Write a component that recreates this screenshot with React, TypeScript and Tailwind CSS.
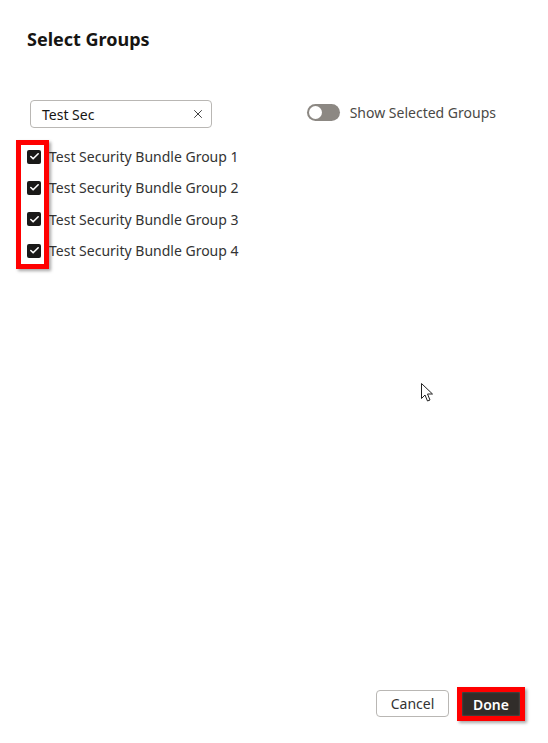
import { Check, X } from "lucide-react";

const groups = [
  "Test Security Bundle Group 1",
  "Test Security Bundle Group 2",
  "Test Security Bundle Group 3",
  "Test Security Bundle Group 4",
];

export default function App() {
  return (
    <div className="relative flex h-[743px] w-[548px] flex-col bg-white font-['Noto_Sans',sans-serif] text-[#333]">
      <h1 className="px-[27px] pt-[27px] text-[18px] font-bold leading-[24px] text-[#161513]">
        Select Groups
      </h1>

      <div className="mt-[49px] flex items-center pl-[30px] pr-[52px]">
        <div className="flex h-[28px] w-[182px] items-center rounded-[4px] border border-[#b9b7b4] pl-[11px] pr-[6px]">
          <span className="flex-1 text-[14px] text-[#161513]">Test Sec</span>
          <X className="h-[14px] w-[14px] text-[#333]" strokeWidth={1.6} />
        </div>
        <div className="mb-[4px] ml-auto flex items-center gap-[10px]">
          <div className="flex h-[17px] w-[33px] items-center rounded-full bg-[#8c8883] px-[2px]">
            <div className="h-[13px] w-[13px] rounded-full bg-white" />
          </div>
          <span className="text-[14px] text-[#4a4946]">Show Selected Groups</span>
        </div>
      </div>

      <div className="relative mt-[13px] flex flex-col pl-[27px]">
        {groups.map((g) => (
          <div key={g} className="flex h-[31.3px] items-center gap-[8px]">
            <div className="flex h-[14px] w-[14px] items-center justify-center rounded-[2px] bg-[#1a1918]">
              <Check className="h-[11px] w-[11px] text-white" strokeWidth={3.5} />
            </div>
            <span className="text-[14px] text-[#333]">{g}</span>
          </div>
        ))}
        <div className="absolute left-[16px] top-[-1px] h-[129px] w-[33px] border-[5px] border-[#f00] shadow-[2px_2px_3px_rgba(0,0,0,0.35)]" />
      </div>

      <div className="mt-auto flex items-center justify-end gap-[8px] pb-[22px] pr-[23px]">
        <button className="h-[27px] w-[73px] rounded-[4px] border border-[#b9b7b4] bg-white text-[14px] text-[#333]">
          Cancel
        </button>
        <div className="border-[5px] border-[#f00] shadow-[2px_2px_3px_rgba(0,0,0,0.35)]">
          <button className="h-[24px] w-[58px] bg-[#312d2a] text-[14px] font-semibold text-white shadow-[inset_0_0_2px_rgba(255,255,255,0.3)]">
            Done
          </button>
        </div>
      </div>

      <svg
        className="absolute left-[421px] top-[383px]"
        width="13"
        height="20"
        viewBox="0 0 13 20"
      >
        <path
          d="M0.5 0.5 L0.5 15.5 L4 12 L6.5 18 L9 17 L6.5 11 L11.5 11 Z"
          fill="white"
          stroke="#222"
          strokeWidth="1"
        />
      </svg>
    </div>
  );
}
